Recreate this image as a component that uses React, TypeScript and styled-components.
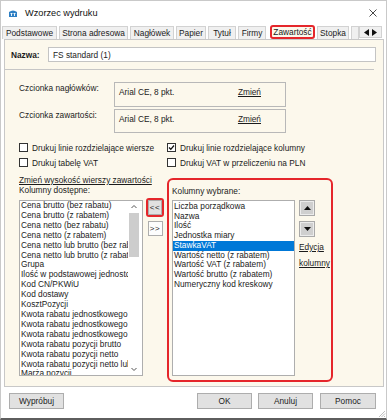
import React from 'react';
import styled, { createGlobalStyle } from 'styled-components';

const GlobalStyle = createGlobalStyle`
  html, body { margin: 0; padding: 0; background: #ffffff; }
  body {
    font-family: "Liberation Sans", Arial, sans-serif;
    font-size: 8.3px;
    color: #1b1b1b;
  }
  * { box-sizing: border-box; }
`;

const Window = styled.div`
  width: 387px;
  height: 420px;
  display: flex;
  flex-direction: column;
  background: #ffffff;
  border: 1px solid #c9c9c9;
  border-bottom: 2px solid #5e5e5e;
  overflow: hidden;
`;

const TitleBar = styled.div`
  height: 24px;
  display: flex;
  align-items: center;
  padding-left: 7px;
  flex-shrink: 0;
`;

const TitleText = styled.span`
  margin-left: 7px;
  font-size: 9.2px;
  color: #111;
  flex: 1;
`;

const CloseIcon = styled.svg`
  width: 8px;
  height: 8px;
  margin-right: 9px;
`;

const TabStrip = styled.div`
  height: 14px;
  display: flex;
  align-items: flex-end;
  padding-left: 1px;
  flex-shrink: 0;
`;

const Tab = styled.div<{ $w: number; $active?: boolean; $gap?: number }>`
  width: ${(p) => p.$w}px;
  height: ${(p) => (p.$active ? 14 : 13)}px;
  margin-right: ${(p) => p.$gap ?? 2}px;
  display: flex;
  align-items: center;
  justify-content: center;
  overflow: hidden;
  white-space: nowrap;
  background: ${(p) => (p.$active ? '#fcf8ec' : '#f0f0f0')};
  border: ${(p) => (p.$active ? '2px solid #e5262b' : '1px solid #d2d2d2')};
  border-bottom: ${(p) => (p.$active ? '2px solid #e5262b' : 'none')};
  border-radius: ${(p) => (p.$active ? '3px' : '0')};
  color: #1b1b1b;
`;

const TabArrows = styled.div`
  width: 23px;
  height: 12px;
  margin-bottom: 1px;
  display: flex;
  align-items: center;
  justify-content: center;
  gap: 3px;
  background: #f0f0f0;
  border: 1px solid #d2d2d2;
`;

const Panel = styled.div`
  height: 348px;
  margin: 0 2px 0 3px;
  border: 1px solid #c8c8c8;
  background: #fcf8ec;
  flex-shrink: 0;
  display: flex;
  flex-direction: column;
`;

const NameRow = styled.div`
  display: flex;
  align-items: center;
  padding: 7px 0 0 6px;
`;

const NameLabel = styled.span`
  width: 37px;
  font-weight: bold;
`;

const NameInput = styled.div`
  width: 328px;
  height: 15px;
  border: 1px solid #c4c4c4;
  background: #ffffff;
  padding-left: 4px;
  display: flex;
  align-items: center;
`;

const Separator = styled.div`
  height: 1px;
  background: #c6c6c6;
  margin: 7px 9px 0 0;
`;

const FontRows = styled.div`
  display: flex;
  flex-direction: column;
  gap: 2px;
  margin-top: 12px;
  padding-left: 14px;
`;

const FontRow = styled.div`
  display: flex;
  align-items: flex-start;
`;

const FontLabel = styled.span`
  width: 95px;
  line-height: 10px;
  padding-top: 1px;
`;

const FontBox = styled.div<{ $h: number }>`
  width: 172px;
  height: ${(p) => p.$h}px;
  border: 1px solid #b8b8b8;
  padding: 4px 24px 0 4px;
  display: flex;
  justify-content: space-between;
  line-height: 10px;
`;

const LinkText = styled.span`
  text-decoration: underline;
  line-height: 10px;
  white-space: nowrap;
`;

const CheckGrid = styled.div`
  display: grid;
  grid-template-columns: 148px 1fr;
  grid-auto-rows: 15px;
  margin-top: 7px;
  padding-left: 14px;
`;

const CheckItem = styled.div`
  display: flex;
  align-items: center;
  gap: 4px;
  white-space: nowrap;
`;

const Box = styled.span`
  width: 9px;
  height: 9px;
  border: 1px solid #333;
  background: #ffffff;
  display: flex;
  align-items: center;
  justify-content: center;
`;

const LowerArea = styled.div`
  display: flex;
  align-items: flex-start;
  margin-top: 3px;
  padding-left: 14px;
`;

const LeftColumn = styled.div`
  width: 124px;
  margin-top: 2px;
  display: flex;
  flex-direction: column;
`;

const Caption = styled.span`
  line-height: 10px;
  white-space: nowrap;
`;

const ListBox = styled.div<{ $w: number; $mt: number }>`
  width: ${(p) => p.$w}px;
  height: 176px;
  margin-top: ${(p) => p.$mt}px;
  border: 1px solid #aeaeae;
  background: #ffffff;
  display: flex;
  overflow: hidden;
`;

const Items = styled.div<{ $lh: number; $pt: number }>`
  flex: 1;
  min-width: 0;
  padding-top: ${(p) => p.$pt}px;
  line-height: ${(p) => p.$lh}px;
  overflow: hidden;
`;

const Item = styled.div<{ $selected?: boolean }>`
  padding-left: 1px;
  white-space: nowrap;
  overflow: hidden;
  background: ${(p) => (p.$selected ? '#0078d7' : 'transparent')};
  color: ${(p) => (p.$selected ? '#ffffff' : '#1b1b1b')};
`;

const ScrollBar = styled.div`
  width: 14px;
  display: flex;
  flex-direction: column;
  align-items: flex-start;
  padding-left: 1px;
`;

const ScrollArrow = styled.svg`
  width: 10px;
  height: 11px;
  flex-shrink: 0;
`;

const Thumb = styled.div`
  width: 10px;
  height: 44px;
  background: #cdcdcd;
  margin-top: 1px;
`;

const MiddleColumn = styled.div`
  width: 24px;
  margin-top: 25px;
  display: flex;
  flex-direction: column;
  align-items: center;
  gap: 4px;
`;

const RedMark = styled.div`
  width: 18px;
  height: 19px;
  border: 2px solid #e5262b;
  border-radius: 3px;
  display: flex;
  align-items: center;
  justify-content: center;
`;

const MoveButton = styled.div<{ $light?: boolean }>`
  width: ${(p) => (p.$light ? 15 : 14)}px;
  height: 15px;
  border: 1px solid #adadad;
  background: ${(p) => (p.$light ? '#fdfdfd' : '#e1e1e1')};
  display: flex;
  align-items: center;
  justify-content: center;
  font-size: 8px;
  letter-spacing: 0.5px;
  line-height: 1;
`;

const SelectedFrame = styled.div`
  width: 166px;
  height: 204px;
  margin-top: 5px;
  border: 2px solid #e5262b;
  border-radius: 6px;
  padding: 6px 0 0 3px;
  display: flex;
  flex-direction: column;
`;

const SelectedRow = styled.div`
  display: flex;
  align-items: flex-start;
`;

const SideColumn = styled.div`
  margin-left: 4px;
  margin-top: 4px;
  display: flex;
  flex-direction: column;
  align-items: flex-start;
`;

const OrderButton = styled.div<{ $mt?: number }>`
  width: 16px;
  height: 16px;
  margin-top: ${(p) => p.$mt ?? 0}px;
  border: 1px solid #a9a9a9;
  box-shadow: inset 0 0 0 1px #ececec;
  background: #cfcfcf;
  display: flex;
  align-items: center;
  justify-content: center;
`;

const SideLink = styled(LinkText)<{ $mt: number }>`
  margin-top: ${(p) => p.$mt}px;
`;

const Footer = styled.div`
  flex: 1;
  display: flex;
  align-items: flex-start;
  padding: 6px 0 0 8px;
`;

const Button = styled.div<{ $w: number; $ml?: number }>`
  width: ${(p) => p.$w}px;
  height: 16px;
  margin-left: ${(p) => p.$ml ?? 0}px;
  border: 1px solid #adadad;
  background: #e1e1e1;
  display: flex;
  align-items: center;
  justify-content: center;
`;

const Spacer = styled.div`
  flex: 1;
`;

const Grip = styled.svg`
  width: 10px;
  height: 10px;
  align-self: flex-end;
`;

const available = [
  'Cena brutto (bez rabatu)',
  'Cena brutto (z rabatem)',
  'Cena netto (bez rabatu)',
  'Cena netto (z rabatem)',
  'Cena netto lub brutto (bez rabatu)',
  'Cena netto lub brutto (z rabatem)',
  'Grupa',
  'Ilość w podstawowej jednostce',
  'Kod CN/PKWiU',
  'Kod dostawy',
  'KosztPozycji',
  'Kwota rabatu jednostkowego brutto',
  'Kwota rabatu jednostkowego netto',
  'Kwota rabatu jednostkowego netto lub brutto',
  'Kwota rabatu pozycji brutto',
  'Kwota rabatu pozycji netto',
  'Kwota rabatu pozycji netto lub brutto',
  'Marża pozycji',
];

const chosen = [
  'Liczba porządkowa',
  'Nazwa',
  'Ilość',
  'Jednostka miary',
  'StawkaVAT',
  'Wartość netto (z rabatem)',
  'Wartość VAT (z rabatem)',
  'Wartość brutto (z rabatem)',
  'Numeryczny kod kreskowy',
];

const tabs = [
  { label: 'Podstawowe', w: 55 },
  { label: 'Strona adresowa', w: 69 },
  { label: 'Nagłówek', w: 44 },
  { label: 'Papier', w: 30 },
  { label: 'Tytuł', w: 28 },
  { label: 'Firmy', w: 28, gap: 4 },
  { label: 'Zawartość', w: 45, active: true },
  { label: 'Stopka', w: 32 },
];

const Check = ({ checked }: { checked?: boolean }) => (
  <Box>
    {checked && (
      <svg width="7" height="7" viewBox="0 0 7 7">
        <path d="M1 3.5 L2.8 5.3 L6 1.5" fill="none" stroke="#111" strokeWidth="1.3" />
      </svg>
    )}
  </Box>
);

const Triangle = ({ down }: { down?: boolean }) => (
  <svg width="7" height="4" viewBox="0 0 7 4">
    <path d={down ? 'M0 0 H7 L3.5 4 Z' : 'M0 4 H7 L3.5 0 Z'} fill="#111" />
  </svg>
);

export default function App() {
  return (
    <>
      <GlobalStyle />
      <Window>
        <TitleBar>
          <svg width="10" height="9" viewBox="0 0 10 9">
            <path d="M1 3 Q5 0 9 3 L9 8 L1 8 Z" fill="#2d7fc4" />
            <path d="M2.5 4.5 H4.5 M3.5 4.5 V7 M5.5 4.5 H7.5 M6.5 4.5 V7" stroke="#fff" strokeWidth="0.9" />
          </svg>
          <TitleText>Wzorzec wydruku</TitleText>
          <CloseIcon viewBox="0 0 8 8">
            <path d="M0.5 0.5 L7.5 7.5 M7.5 0.5 L0.5 7.5" stroke="#333" strokeWidth="0.9" />
          </CloseIcon>
        </TitleBar>

        <TabStrip>
          {tabs.map((t) => (
            <Tab key={t.label} $w={t.w} $active={t.active} $gap={t.gap}>
              {t.label}
            </Tab>
          ))}
          {/* next tab, hidden behind the scroll arrows */}
          <Tab $w={8} $gap={0} />
          <TabArrows>
            <svg width="5" height="7" viewBox="0 0 5 7">
              <path d="M5 0 V7 L0 3.5 Z" fill="#111" />
            </svg>
            <svg width="5" height="7" viewBox="0 0 5 7">
              <path d="M0 0 V7 L5 3.5 Z" fill="#111" />
            </svg>
          </TabArrows>
        </TabStrip>

        <Panel>
          <NameRow>
            <NameLabel>Nazwa:</NameLabel>
            <NameInput>FS standard (1)</NameInput>
          </NameRow>
          <Separator />

          <FontRows>
            <FontRow>
              <FontLabel>Czcionka nagłówków:</FontLabel>
              <FontBox $h={25}>
                <span>Arial CE, 8 pkt.</span>
                <LinkText>Zmień</LinkText>
              </FontBox>
            </FontRow>
            <FontRow>
              <FontLabel>Czcionka zawartości:</FontLabel>
              <FontBox $h={24}>
                <span>Arial CE, 8 pkt.</span>
                <LinkText>Zmień</LinkText>
              </FontBox>
            </FontRow>
          </FontRows>

          <CheckGrid>
            <CheckItem>
              <Check />
              Drukuj linie rozdzielające wiersze
            </CheckItem>
            <CheckItem>
              <Check checked />
              Drukuj linie rozdzielające kolumny
            </CheckItem>
            <CheckItem>
              <Check />
              Drukuj tabelę VAT
            </CheckItem>
            <CheckItem>
              <Check />
              Drukuj VAT w przeliczeniu na PLN
            </CheckItem>
          </CheckGrid>

          <LowerArea>
            <LeftColumn>
              <LinkText>Zmień wysokość wierszy zawartości</LinkText>
              <Caption>Kolumny dostępne:</Caption>
              <ListBox $w={124} $mt={5}>
                <Items $lh={9.9} $pt={0}>
                  {available.map((a) => (
                    <Item key={a}>{a}</Item>
                  ))}
                </Items>
                <ScrollBar>
                  <ScrollArrow viewBox="0 0 10 11">
                    <path d="M2.5 7 L5 4.5 L7.5 7" fill="none" stroke="#555" strokeWidth="1" />
                  </ScrollArrow>
                  <Thumb />
                  <Spacer />
                  <ScrollArrow viewBox="0 0 10 11">
                    <path d="M2.5 4 L5 6.5 L7.5 4" fill="none" stroke="#555" strokeWidth="1" />
                  </ScrollArrow>
                </ScrollBar>
              </ListBox>
            </LeftColumn>

            <MiddleColumn>
              <RedMark>
                <MoveButton>&lt;&lt;</MoveButton>
              </RedMark>
              <MoveButton $light>&gt;&gt;</MoveButton>
            </MiddleColumn>

            <SelectedFrame>
              <Caption>Kolumny wybrane:</Caption>
              <SelectedRow>
                <ListBox $w={123} $mt={4}>
                  <Items $lh={9.7} $pt={1}>
                    {chosen.map((c) => (
                      <Item key={c} $selected={c === 'StawkaVAT'}>
                        {c}
                      </Item>
                    ))}
                  </Items>
                </ListBox>
                <SideColumn>
                  <OrderButton>
                    <Triangle />
                  </OrderButton>
                  <OrderButton $mt={5}>
                    <Triangle down />
                  </OrderButton>
                  <SideLink $mt={5}>Edycja</SideLink>
                  <SideLink $mt={6}>kolumny</SideLink>
                </SideColumn>
              </SelectedRow>
            </SelectedFrame>
          </LowerArea>
        </Panel>

        <Footer>
          <Button $w={55}>Wypróbuj</Button>
          <Spacer />
          <Button $w={55}>OK</Button>
          <Button $w={55} $ml={6}>
            Anuluj
          </Button>
          <Button $w={56} $ml={7}>
            Pomoc
          </Button>
          <Grip viewBox="0 0 10 10">
            <path d="M9 3 L3 9 M9 5.5 L5.5 9 M9 8 L8 9" stroke="#b0b0b0" strokeWidth="0.8" />
          </Grip>
        </Footer>
      </Window>
    </>
  );
}
